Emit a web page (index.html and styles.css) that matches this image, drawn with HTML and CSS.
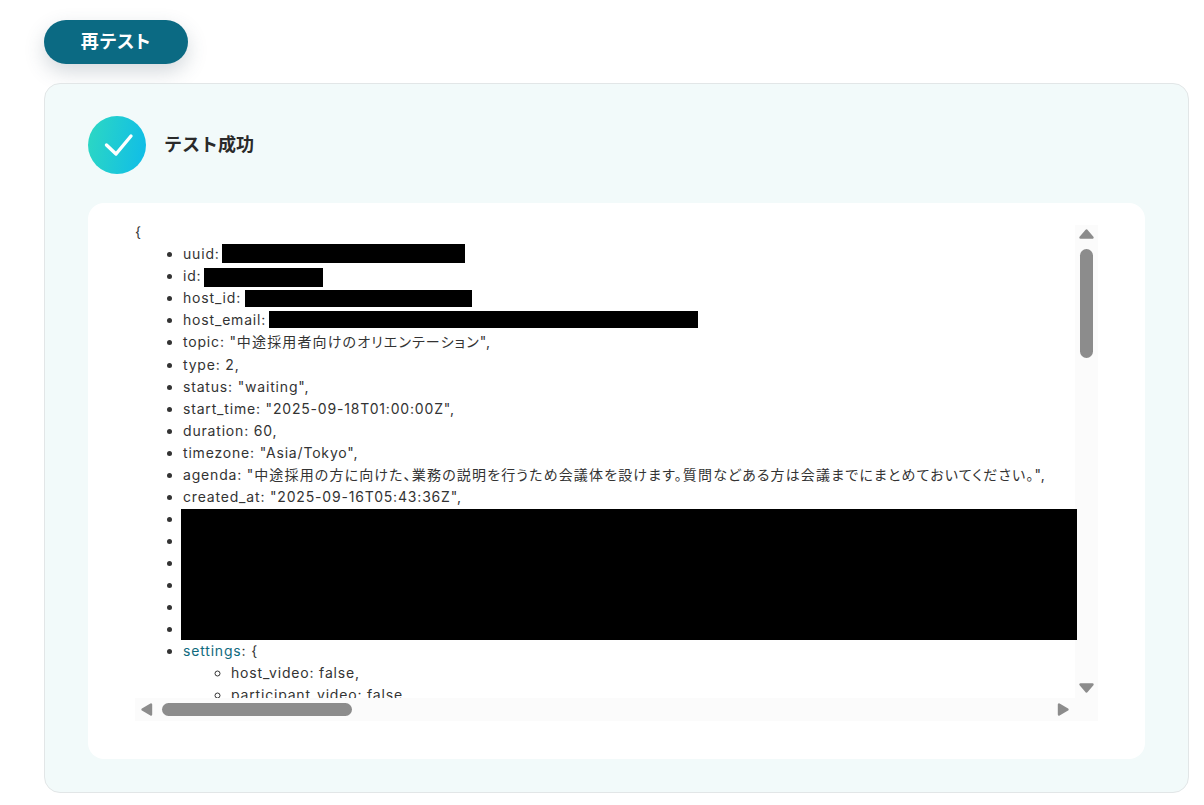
FILE: index.html
```html
<!DOCTYPE html>
<html lang="ja">
<head>
<meta charset="utf-8">
<title>テスト成功</title>
<link rel="stylesheet" href="styles.css">
</head>
<body>
<main class="page">
  <button class="retest" type="button">再テスト</button>
  <section class="result">
    <header class="result-head">
      <span class="badge">
        <svg class="check" width="58" height="58" viewBox="0 0 58 58"><path d="M18.5 29 L28 38 L43 20" fill="none" stroke="#fff" stroke-width="3.4" stroke-linecap="round" stroke-linejoin="round"/></svg>
      </span>
      <h2 class="result-title">テスト成功</h2>
    </header>
    <div class="panel">
      <div class="scroller">
        <div class="viewport">
          <div class="tree">
            <div class="brace">{</div>
            <ul class="list">
              <li>uuid: <span class="redact r-uuid"></span></li>
              <li>id: <span class="redact r-id"></span></li>
              <li>host_id: <span class="redact r-host"></span></li>
              <li>host_email: <span class="redact r-email"></span></li>
              <li>topic: "<span class="ja">中途採用者向けのオリエンテーション</span>",</li>
              <li>type: 2,</li>
              <li>status: "waiting",</li>
              <li>start_time: "2025-09-18T01:00:00Z",</li>
              <li>duration: 60,</li>
              <li>timezone: "Asia/Tokyo",</li>
              <li>agenda: "<span class="ja">中途採用の方に向けた、業務の説明を行うため会議体を設けます。質問などある方は会議までにまとめておいてください。</span>",</li>
              <li>created_at: "2025-09-16T05:43:36Z",</li>
              <li class="hidden-row"></li>
              <li class="hidden-row"></li>
              <li class="hidden-row"></li>
              <li class="hidden-row"></li>
              <li class="hidden-row"></li>
              <li class="hidden-row"></li>
              <li><span class="key">settings</span>: {
                <ul class="sublist">
                  <li>host_video: false,</li>
                  <li>participant_video: false,</li>
                </ul>
              </li>
            </ul>
          </div>
          <div class="block-redact"></div>
        </div>
        <div class="vbar">
          <svg class="arrow" width="23" height="20" viewBox="0 0 23 20"><path d="M11.5 5.5 L17.5 12.5 H5.5 Z" fill="#8c8c8c" stroke="#8c8c8c" stroke-width="2.4" stroke-linejoin="round"/></svg>
          <div class="vthumb"></div>
          <div class="spacer"></div>
          <svg class="arrow" width="23" height="20" viewBox="0 0 23 20"><path d="M5.5 6.5 H17.5 L11.5 13.5 Z" fill="#8c8c8c" stroke="#8c8c8c" stroke-width="2.4" stroke-linejoin="round"/></svg>
        </div>
        <div class="hbar">
          <svg class="arrow" width="27" height="23" viewBox="0 0 27 23"><path d="M16 6.5 V16.5 L7.5 11.5 Z" fill="#8c8c8c" stroke="#8c8c8c" stroke-width="2.4" stroke-linejoin="round"/></svg>
          <div class="hthumb"></div>
          <div class="spacer"></div>
          <svg class="arrow" width="28" height="23" viewBox="0 0 28 23"><path d="M12 6.5 V16.5 L20.5 11.5 Z" fill="#8c8c8c" stroke="#8c8c8c" stroke-width="2.4" stroke-linejoin="round"/></svg>
        </div>
        <div class="corner"></div>
      </div>
    </div>
  </section>
</main>
</body>
</html>
```
FILE: styles.css
```css
* { box-sizing: border-box; }
html, body { margin: 0; padding: 0; background: #fff; overflow: hidden; }
body { font-family: Inter, "Noto Sans CJK JP", sans-serif; color: #2e2e2e; font-feature-settings: "palt" 1; }
.page { width: 1204px; height: 805px; padding: 20px 15px 0 44px; }
.retest {
  display: block; width: 144px; height: 44px; padding: 0; border: 0; border-radius: 22px;
  background: #0b6a83; color: #fff; font: 700 18px/44px Inter, "Noto Sans CJK JP", sans-serif;
  font-feature-settings: "palt" 1; letter-spacing: 1px;
  box-shadow: 0 8px 20px rgba(60, 80, 100, .22);
}
.result {
  margin-top: 19px; height: 710px; padding: 32px 43px 33px 43px;
  background: #f2fafa; border: 1px solid #e2e6e7; border-radius: 16px;
}
.result-head { display: flex; align-items: center; gap: 18px; height: 58px; }
.badge { width: 58px; height: 58px; border-radius: 50%; background: linear-gradient(100deg, #2dd8c2, #0fbce9); flex: none; }
.check { display: block; }
.result-title { margin: 0; font-size: 18px; font-weight: 600; font-feature-settings: normal; color: #2a2a2a; line-height: 24px; }
.panel { margin-top: 29px; height: 556px; padding: 22px 47px 38px 47px; background: #fff; border-radius: 16px; }
.scroller { display: grid; grid-template-columns: 940px 23px; grid-template-rows: 473px 23px; height: 496px; }
.viewport { position: relative; }
.tree { width: 940px; height: 473px; overflow: hidden; font-size: 14px; line-height: 22.05px; letter-spacing: .82px; color: #333; padding-top: .3px; }
.ja { letter-spacing: 1.15px; }
.brace { height: 18px; line-height: 14px; }
.list { margin: 0; padding: 0 0 0 48px; list-style: disc; }
.sublist { margin: 0; padding: 0 0 0 48px; list-style: circle; }
.hidden-row { height: 22.05px; }
.key { color: #0f6a7e; }
.redact { display: inline-block; background: #000; vertical-align: middle; }
.r-uuid { width: 243px; height: 19px; margin-left: -2px; position: relative; top: -2px; }
.r-id { width: 119px; height: 19px; margin-left: -2px; }
.r-host { width: 227px; height: 17px; margin-left: -1px; position: relative; top: -1px; }
.r-email { width: 429px; height: 17px; margin-left: -2px; position: relative; top: -2px; }
.block-redact { position: absolute; left: 46px; top: 284px; width: 896px; height: 131px; background: #000; z-index: 1; }
.vbar { display: flex; flex-direction: column; align-items: center; background: #fbfbfb; }
.hbar { display: flex; align-items: center; background: #fbfbfb; }
.corner { background: #fbfbfb; }
.arrow { display: block; flex: none; }
.spacer { flex: 1; }
.vthumb { width: 13px; height: 109px; margin-top: 4px; border-radius: 7px; background: #8c8c8c; }
.hthumb { width: 190px; height: 13px; border-radius: 7px; background: #8c8c8c; }
```
